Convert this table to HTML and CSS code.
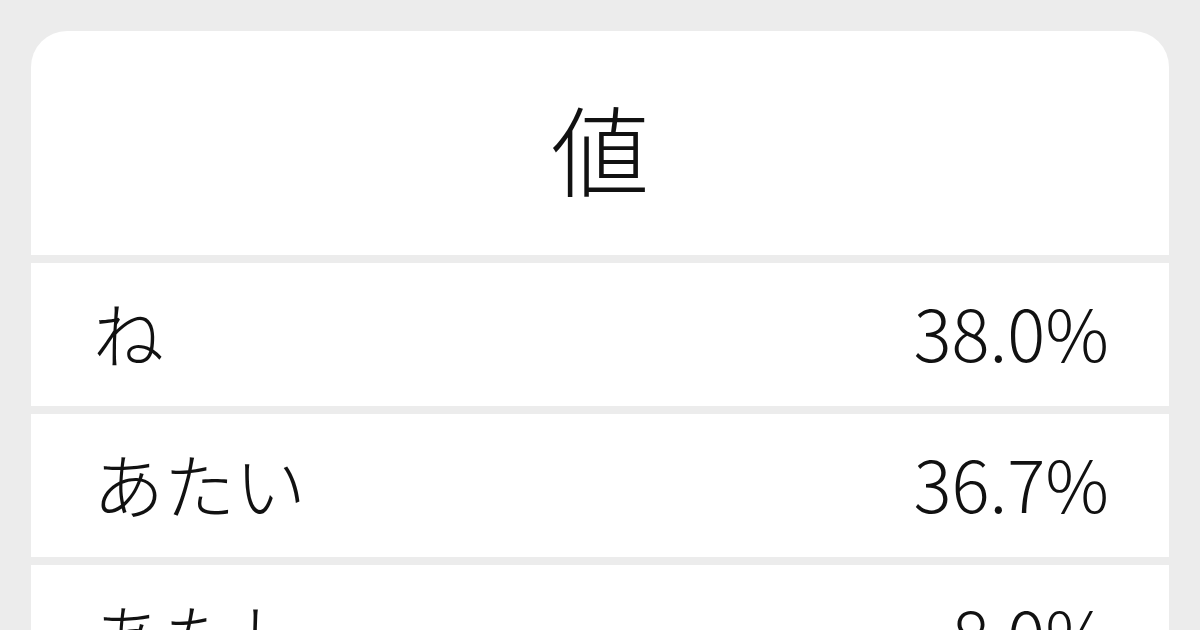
FILE: index.html
```html
<!DOCTYPE html>
<html lang="ja">
<head>
<meta charset="utf-8">
<link rel="stylesheet" href="styles.css">
</head>
<body>
<div class="card">
  <div class="header">値</div>
  <div class="row"><span class="word">ね</span><span class="pct">38.0%</span></div>
  <div class="row"><span class="word">あたい</span><span class="pct">36.7%</span></div>
  <div class="row"><span class="word">あたし</span><span class="pct">8.0%</span></div>
</div>
</body>
</html>
```
FILE: styles.css
```css
html, body {
  margin: 0;
  padding: 0;
  background: #ececec;
}
body {
  width: 1200px;
  height: 630px;
  overflow: hidden;
  padding: 31px 31px 0 31px;
  box-sizing: border-box;
  font-family: "Noto Sans CJK JP", "Noto Sans", sans-serif;
  font-weight: 300;
  color: #111;
}
.card {
  display: flex;
  flex-direction: column;
  gap: 8px;
  border-radius: 36px 36px 0 0;
  overflow: hidden;
}
.header {
  height: 224px;
  background: #fff;
  display: flex;
  align-items: center;
  justify-content: center;
  font-size: 98px;
  line-height: 1;
  padding-top: 6px;
  box-sizing: border-box;
}
.row {
  height: 143px;
  flex: none;
  box-sizing: border-box;
  background: #fff;
  display: flex;
  align-items: center;
  justify-content: space-between;
  padding: 0 60px 6px 62px;
  font-size: 71px;
  line-height: 1;
}
```
